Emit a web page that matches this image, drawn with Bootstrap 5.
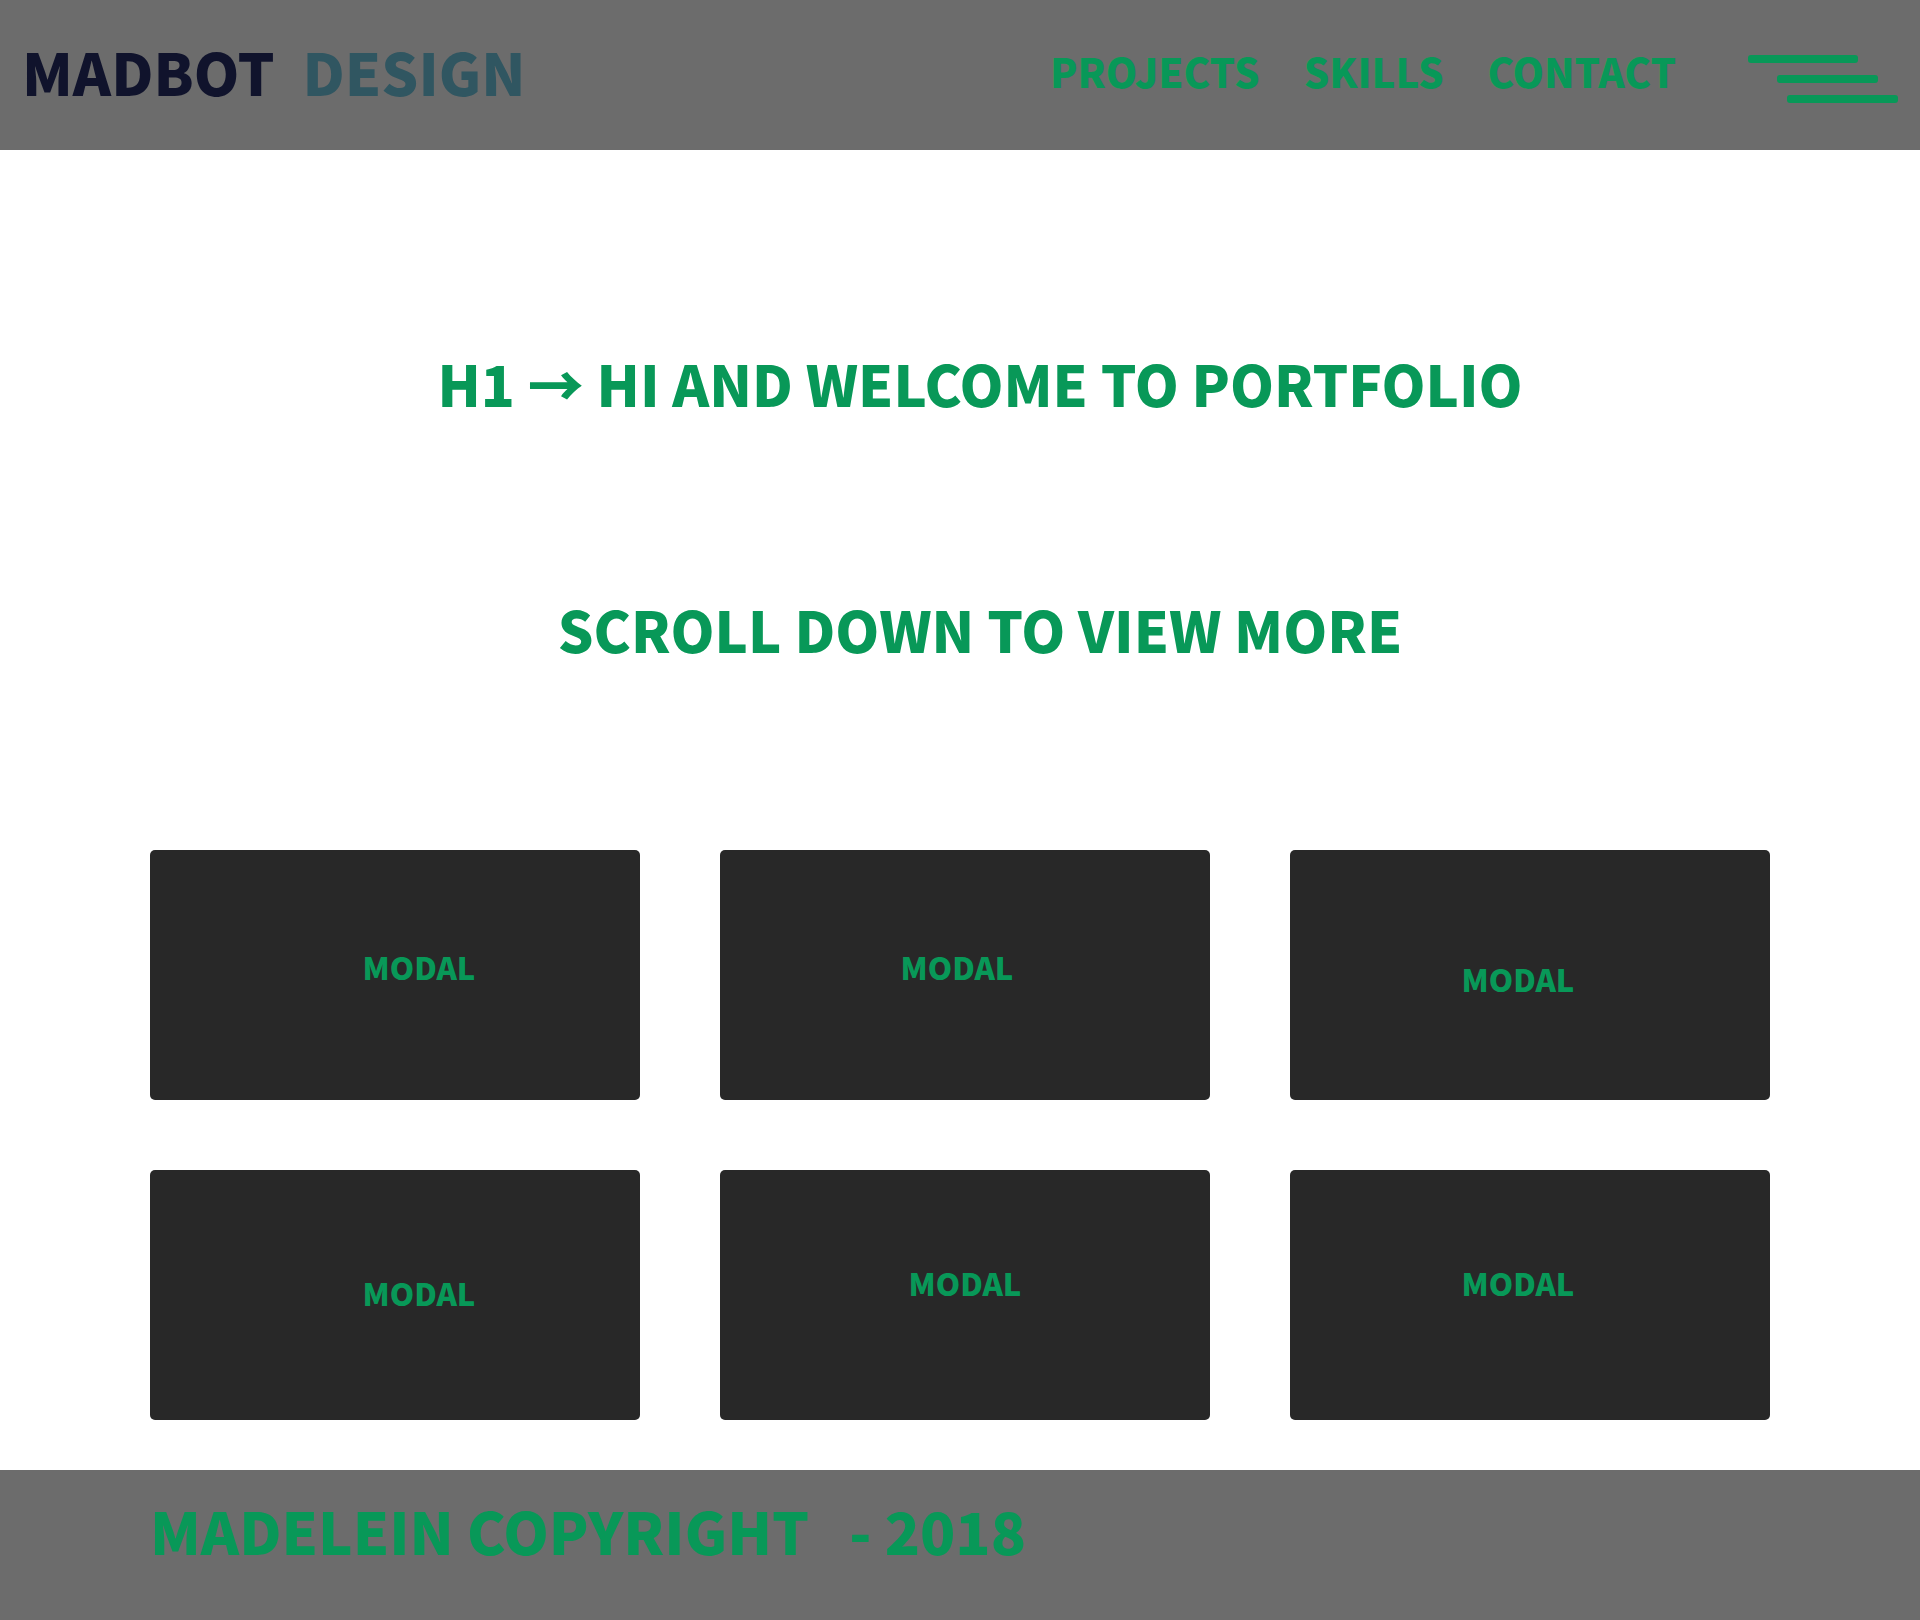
<!DOCTYPE html>
<html lang="en">
<head>
<meta charset="utf-8">
<meta name="viewport" content="width=device-width, initial-scale=1">
<title>Madbot Design</title>
<link href="https://cdn.jsdelivr.net/npm/bootstrap@5.3.0/dist/css/bootstrap.min.css" rel="stylesheet">
<style>
  :root { --brand-green: #089858; --bar-grey: #6c6c6c; }
  body { font-family: "Noto Sans CJK SC", "Liberation Sans", sans-serif; font-weight: 900; color: var(--brand-green); background: #fff; }
  .site-bar { background: var(--bar-grey); min-height: 150px; padding: 0 22px 8px; }
  .display-line { font-size: 58px; line-height: 90px; font-weight: 900; margin: 0; }
  .hero .display-line { font-size: 56px; }
  .brand-link { gap: 28px; color: #10132c; }
  .brand-second { color: #305661; }
  .site-links { gap: 44px; font-size: 40px; line-height: 60px; }
  .site-links a { color: var(--brand-green); }
  .menu-toggle { margin: 16px 0 0 28px; }
  .hero { padding: 188px 0 176px 40px; gap: 156px; }
  .tiles { padding: 0 150px 50px; gap: 70px 80px; grid-template-columns: 49fr 49fr 48fr; grid-auto-rows: 250px; }
  .tile { background: #282828; border-radius: 5px; font-size: 31px; line-height: 40px; color: var(--brand-green); font-weight: 900; }
  .site-foot { padding: 0 150px 30px; gap: 40px; }
</style>
</head>
<body>
<header class="site-bar d-flex align-items-center justify-content-between">
  <a class="brand-link display-line d-flex text-decoration-none" href="#"><span>MADBOT</span><span class="brand-second">DESIGN</span></a>
  <nav class="site-links d-flex align-items-center" aria-label="Main">
    <a class="text-decoration-none" href="#projects">PROJECTS</a>
    <a class="text-decoration-none" href="#skills">SKILLS</a>
    <a class="text-decoration-none" href="#contact">CONTACT</a>
    <button class="menu-toggle btn p-0 border-0 d-flex" type="button" aria-label="Menu">
      <svg width="150" height="48" viewBox="0 0 150 48" fill="#089858" aria-hidden="true">
        <rect x="0" y="0" width="110" height="8" rx="3"/>
        <rect x="29" y="20" width="101" height="8" rx="3"/>
        <rect x="39" y="40" width="111" height="8" rx="3"/>
      </svg>
    </button>
  </nav>
</header>
<main>
  <section class="hero d-flex flex-column text-center">
    <h1 class="display-line">H1 → HI AND WELCOME TO PORTFOLIO</h1>
    <h2 class="display-line">SCROLL DOWN TO VIEW MORE</h2>
  </section>
  <section class="tiles d-grid" id="projects">
    <button type="button" class="tile border-0 p-0 d-flex align-items-center justify-content-center"><span class="ps-5 pb-3">MODAL</span></button>
    <button type="button" class="tile border-0 p-0 d-flex align-items-center justify-content-center"><span class="pe-3 pb-3">MODAL</span></button>
    <button type="button" class="tile border-0 p-0 d-flex align-items-center justify-content-center"><span class="pe-4 pt-2">MODAL</span></button>
    <button type="button" class="tile border-0 p-0 d-flex align-items-center justify-content-center"><span class="ps-5 pb-1">MODAL</span></button>
    <button type="button" class="tile border-0 p-0 d-flex align-items-center justify-content-center"><span class="pb-4">MODAL</span></button>
    <button type="button" class="tile border-0 p-0 d-flex align-items-center justify-content-center"><span class="pe-4 pb-4">MODAL</span></button>
  </section>
</main>
<footer class="site-bar site-foot display-line d-flex align-items-center" id="contact">
  <span>MADELEIN COPYRIGHT</span><span>- 2018</span>
</footer>
<script src="https://cdn.jsdelivr.net/npm/bootstrap@5.3.0/dist/js/bootstrap.bundle.min.js"></script>
</body>
</html>
